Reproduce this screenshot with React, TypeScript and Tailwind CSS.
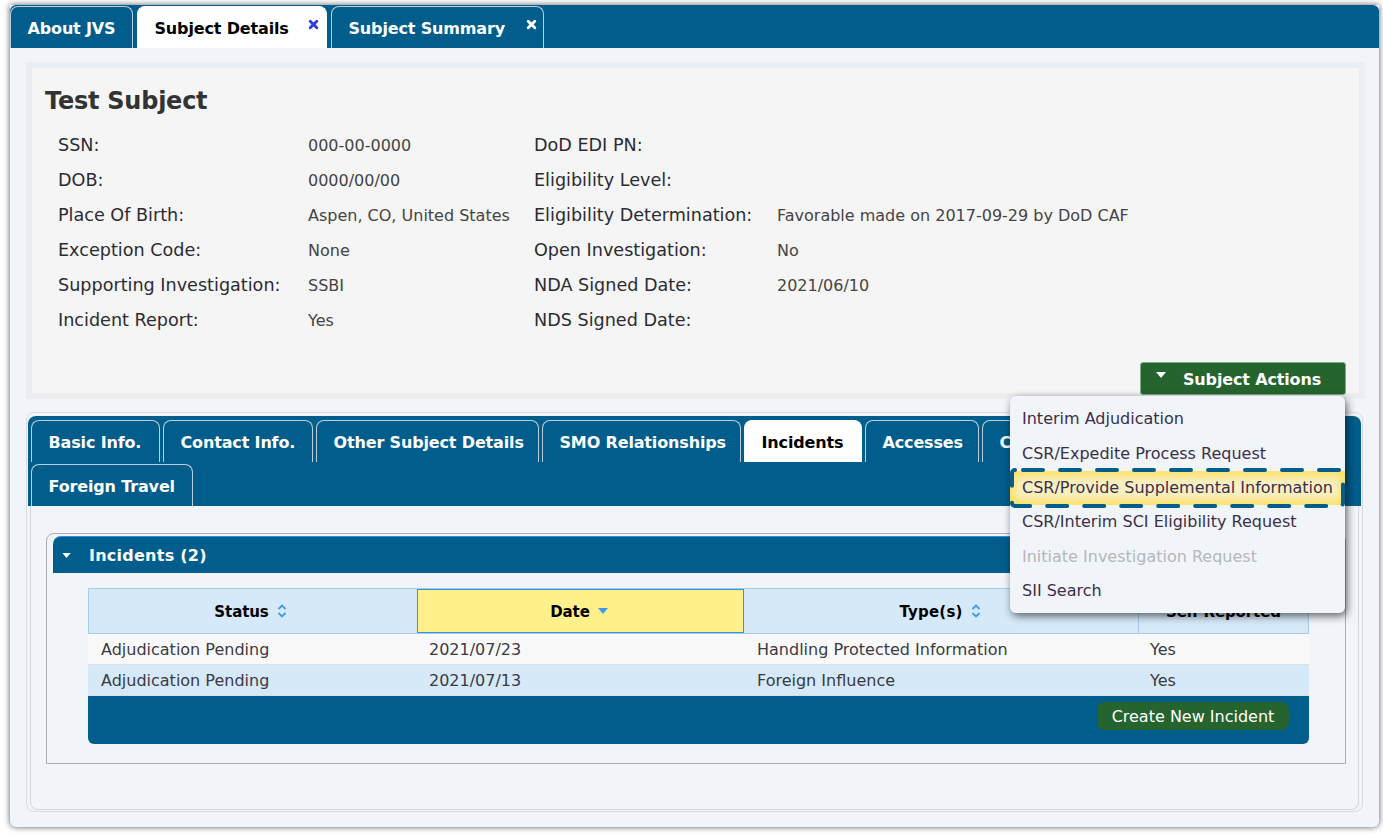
import { ReactNode } from 'react';

const FONT = 'font-["DejaVu_Sans",Verdana,sans-serif]';

const details = [
  ['SSN:', '000-00-0000', 'DoD EDI PN:', ''],
  ['DOB:', '0000/00/00', 'Eligibility Level:', ''],
  ['Place Of Birth:', 'Aspen, CO, United States', 'Eligibility Determination:', 'Favorable made on 2017-09-29 by DoD CAF'],
  ['Exception Code:', 'None', 'Open Investigation:', 'No'],
  ['Supporting Investigation:', 'SSBI', 'NDA Signed Date:', '2021/06/10'],
  ['Incident Report:', 'Yes', 'NDS Signed Date:', ''],
];

const menuItems = [
  { label: 'Interim Adjudication' },
  { label: 'CSR/Expedite Process Request' },
  { label: 'CSR/Provide Supplemental Information', highlight: true },
  { label: 'CSR/Interim SCI Eligibility Request' },
  { label: 'Initiate Investigation Request', disabled: true },
  { label: 'SII Search' },
];

const rows = [
  ['Adjudication Pending', '2021/07/23', 'Handling Protected Information', 'Yes'],
  ['Adjudication Pending', '2021/07/13', 'Foreign Influence', 'Yes'],
];

function CloseIcon({ className }: { className: string }) {
  return (
    <svg viewBox="0 0 10 10" className={className}>
      <path d="M2 2 L8 8 M8 2 L2 8" stroke="currentColor" strokeWidth="2.6" strokeLinecap="round" fill="none" />
    </svg>
  );
}

function Caret({ className }: { className: string }) {
  return (
    <svg viewBox="0 0 10 6" className={className}>
      <path d="M0 0 H10 L5 6 Z" fill="currentColor" />
    </svg>
  );
}

function SortBoth() {
  return (
    <svg viewBox="0 0 10 14" className="mb-[2px] ml-2 inline-block h-[14px] w-[10px] text-[#3d9be9]">
      <path d="M1.5 5 L5 1.5 L8.5 5 M1.5 9 L5 12.5 L8.5 9" stroke="currentColor" strokeWidth="1.8" fill="none" />
    </svg>
  );
}

function Tab({ children, width, active }: { children: ReactNode; width: string; active?: boolean }) {
  return (
    <div
      className={`relative flex h-[42px] items-center rounded-t-lg border border-b-0 pl-[16.5px] pt-[2px] text-[16px] font-bold tracking-[-0.15px] ${width} ${
        active ? 'border-white bg-white text-black' : 'border-[#b9cfdd] bg-[#005d8c] text-white'
      }`}
    >
      {children}
    </div>
  );
}

export default function App() {
  return (
    <div className={`h-[837px] w-[1383px] overflow-hidden bg-white pl-[10px] pt-[5px] text-[#333] ${FONT}`}>
      <div className="h-[822px] w-[1369px] rounded-b-md bg-[#f1f5f9] shadow-[0_0_6px_rgba(0,0,0,0.65)]">
        {/* top tabs */}
        <div className="flex h-[43px] gap-[4px] rounded-t-md bg-[#005d8c] pt-[1px]">
          <Tab width="w-[123px]">About JVS</Tab>
          <Tab width="w-[190px]" active>
            Subject Details
            <CloseIcon className="absolute right-[7px] top-[12px] h-[11px] w-[11px] text-[#2a3fd6]" />
          </Tab>
          <Tab width="w-[213px]">
            Subject Summary
            <CloseIcon className="absolute right-[6px] top-[12px] h-[11px] w-[11px] text-white" />
          </Tab>
        </div>

        <div className="px-[16px] pt-[14px]">
          {/* subject block */}
          <div className="h-[337px] w-[1339px] border-[6px] border-[#ebeef0] bg-[#f5f5f5] pl-[13px] pt-[17px]">
            <h1 className="text-[24px] font-bold leading-[32px] tracking-[-0.25px] text-[#333]">Test Subject</h1>
            <div className="mt-[11px] pl-[13px]">
              {details.map((d) => (
                <div key={d[0]} className="grid h-[35px] grid-cols-[250px_226px_243px_1fr] items-center">
                  <div className="text-[17.6px] text-[#2b2b33]">{d[0]}</div>
                  <div className="pt-[1px] text-[16px] text-[#444]">{d[1]}</div>
                  <div className="text-[17.6px] text-[#2b2b33]">{d[2]}</div>
                  <div className="pt-[1px] text-[16px] text-[#444]">{d[3]}</div>
                </div>
              ))}
            </div>
            <div className="mt-[24px] flex justify-end pr-[13px]">
              <div className="relative">
                <div className="flex h-[33px] w-[206px] items-center rounded-[3px] border border-[#7fa98a] bg-[#25632f] pl-[15px] text-[16px] font-bold tracking-[-0.15px] text-white">
                  <Caret className="mb-[8px] h-[6px] w-[10px]" />
                  <span className="ml-[17px] pt-[2px]">Subject Actions</span>
                </div>
                {/* dropdown */}
                <div className="absolute right-[1px] top-[34px] z-20 h-[217px] w-[335px] rounded-md bg-[#f1f5f9] pt-[6px] shadow-[2px_3px_8px_rgba(0,0,0,0.6)]">
                  {menuItems.map((m) => (
                    <div
                      key={m.label}
                      className={`relative flex h-[34.4px] items-center pl-[12px] text-[16px] ${
                        m.disabled ? 'text-[#b4b7ba]' : 'text-[#3a2f4a]'
                      } ${m.highlight ? 'bg-[#f8f0c4] shadow-[inset_0_0_8px_5px_#fbe062]' : ''}`}
                    >
                      {m.label}
                      {m.highlight && (
                        <svg className="absolute -top-[3px] left-0 h-[40px] w-[335px]" viewBox="0 0 335 40">
                          <rect
                            x="2"
                            y="2"
                            width="331"
                            height="36"
                            rx="3"
                            fill="none"
                            stroke="#005d8c"
                            strokeWidth="4"
                            strokeLinecap="round"
                            strokeDasharray="20 17"
                            strokeDashoffset="-8"
                          />
                        </svg>
                      )}
                    </div>
                  ))}
                </div>
              </div>
            </div>
          </div>

          {/* lower tabbed panel */}
          <div className="mt-[13px] h-[400px] w-[1337px] rounded-lg border border-[#d9dcdf] py-[3px]">
            <div className="mx-[1px] flex h-[90px] flex-wrap content-start gap-x-[3px] gap-y-[1px] rounded-t-lg bg-[#005d8c] pl-[3px] pt-[4px]">
              <Tab width="w-[129px]">Basic Info.</Tab>
              <Tab width="w-[150px]">Contact Info.</Tab>
              <Tab width="w-[223px]">Other Subject Details</Tab>
              <Tab width="w-[199px]">SMO Relationships</Tab>
              <Tab width="w-[118px]" active>
                Incidents
              </Tab>
              <Tab width="w-[114px]">Accesses</Tab>
              <Tab width="w-[150px]">C</Tab>
              <div className="w-full" />
              <Tab width="w-[162px]">Foreign Travel</Tab>
            </div>

            <div className="mx-[3px] h-[304px] rounded-b-lg border border-t-0 border-[#d5d8dc] px-[15px] pt-[27px]">
              <div className="h-[231px] w-[1300px] rounded-t-lg border border-[#a9abad] px-[6px] pt-[2px]">
                <div className="flex h-[37px] items-center rounded-tl-lg border-t border-[#2d8fdc] bg-[#005d8c] text-[16px] font-bold tracking-[0.25px] text-white">
                  <Caret className="ml-[9px] h-[5px] w-[9px]" />
                  <span className="ml-[18px] pt-[2px]">Incidents (2)</span>
                </div>

                <div className="ml-[35px] mt-[15px] w-[1221px]">
                  <div className="grid h-[46px] grid-cols-[328px_327px_394px_170px] border border-[#a8cbe8] bg-[#d6e9f8] pt-0 text-[15px] font-bold tracking-[-0.1px] text-black">
                    <div className="flex items-center justify-center pr-[5px] pt-[2px]">
                      Status
                      <SortBoth />
                    </div>
                    <div className="flex items-center justify-center border border-[#2d96e6] bg-[#fff08c] pr-[3px] pt-[2px]">
                      Date
                      <Caret className="mb-[3px] ml-2 h-[6px] w-[10px] text-[#3d9be9]" />
                    </div>
                    <div className="flex items-center justify-center pr-[2px] pt-[2px] tracking-[0.2px]">
                      Type(s)
                      <SortBoth />
                    </div>
                    <div className="flex items-center justify-center border-l border-[#a8cbe8] pt-[2px]">Self Reported</div>
                  </div>
                  {rows.map((r, i) => (
                    <div
                      key={r[1]}
                      className={`grid h-[31px] grid-cols-[328px_328px_393px_172px] items-center border-b border-[#dddddd] pt-[2px] text-[16px] text-[#3a3a44] ${
                        i % 2 === 0 ? 'bg-[#f9f9f9]' : 'bg-[#d6e9f8]'
                      }`}
                    >
                      {r.map((c) => (
                        <div key={c} className="pl-[13px]">
                          {c}
                        </div>
                      ))}
                    </div>
                  ))}
                  <div className="flex h-[48px] items-start justify-end rounded-b-md bg-[#005d8c] pr-[20px] pt-[6px]">
                    <div className="flex h-[28px] w-[192px] items-center justify-center rounded-lg bg-[#25632f] pt-[2px] text-[16px] text-white">
                      Create New Incident
                    </div>
                  </div>
                </div>
              </div>
            </div>
          </div>
        </div>
      </div>
    </div>
  );
}
